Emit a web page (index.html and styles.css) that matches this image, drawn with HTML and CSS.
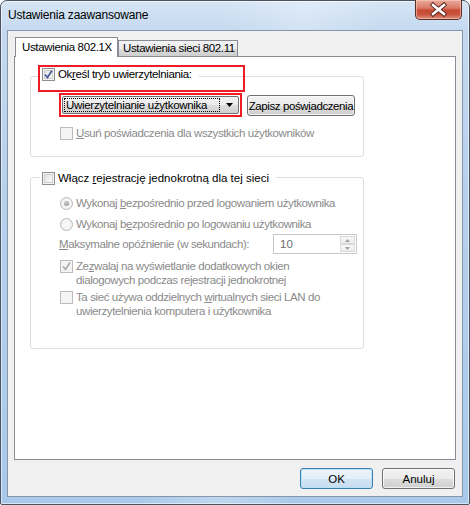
FILE: index.html
```html
<!DOCTYPE html>
<html lang="pl">
<head>
<meta charset="utf-8">
<title>Ustawienia zaawansowane</title>
<link rel="stylesheet" href="styles.css">
</head>
<body>
<div class="window">
  <div class="titlebar">
    <span class="title">Ustawienia zaawansowane</span>
    <div class="close">
      <svg width="45" height="18" viewBox="0 0 45 18">
        <path d="M17 5 L28 14 M28 5 L17 14" stroke="#5a2a22" stroke-width="4.5" stroke-linecap="square" fill="none"/>
        <path d="M17 5 L28 14 M28 5 L17 14" stroke="#ffffff" stroke-width="2.6" stroke-linecap="square" fill="none"/>
      </svg>
    </div>
  </div>
  <div class="client">
    <div class="tabs">
      <div class="tab active">Ustawienia 802.1X</div>
      <div class="tab">Ustawienia sieci 802.11</div>
    </div>
    <div class="panel">
      <div class="group g1">
        <div class="legend annotated tight">
          <span class="cb"><svg width="11" height="11" viewBox="0 0 11 11"><path d="M2 5.5 L4.5 8.5 L9 1.5" stroke="#4a5f98" stroke-width="1.8" fill="none"/></svg></span>
          <span>Ok<u>r</u>eśl tryb uwierzytelniania:</span>
        </div>
        <div class="combo-row">
          <div class="combo-mark">
            <div class="combo">
              <span class="focus">Uwierzytelnianie użytkownika</span>
              <svg class="arrow" width="7" height="4" viewBox="0 0 7 4"><path d="M0 0 H7 L3.5 4 Z" fill="#000"/></svg>
            </div>
          </div>
          <button class="btn save">Zapisz pośw<u>i</u>adczenia</button>
        </div>
        <div class="opt dim first-opt">
          <span class="cb off"></span>
          <span><u>U</u>suń poświadczenia dla wszystkich użytkowników</span>
        </div>
      </div>

      <div class="group g2">
        <div class="legend">
          <span class="cb"></span>
          <span>Włącz <u>r</u>ejestrację jednokrotną dla tej sieci</span>
        </div>
        <div class="opt dim radio1">
          <span class="rb on"></span>
          <span>Wykonaj <u>b</u>ezpośrednio przed logowaniem użytkownika</span>
        </div>
        <div class="opt dim radio2">
          <span class="rb"></span>
          <span>Wykonaj b<u>e</u>zpośrednio po logowaniu użytkownika</span>
        </div>
        <div class="delay-row dim">
          <span><u>M</u>aksymalne opóźnienie (w sekundach):</span>
          <div class="spin">
            <span class="spin-val">10</span>
            <div class="spin-btns">
              <span class="sb"><svg width="5" height="3" viewBox="0 0 5 3"><path d="M0 3 L2.5 0 L5 3 Z" fill="#a0a0a0"/></svg></span>
              <span class="sb"><svg width="5" height="3" viewBox="0 0 5 3"><path d="M0 0 L5 0 L2.5 3 Z" fill="#a0a0a0"/></svg></span>
            </div>
          </div>
        </div>
        <div class="opt dim multi opt3">
          <span class="cb off"><svg width="11" height="11" viewBox="0 0 11 11"><path d="M2 5.5 L4.5 8.5 L9 1.5" stroke="#a9a9a9" stroke-width="1.6" fill="none"/></svg></span>
          <span>Ze<u>z</u>walaj na wyświetlanie dodatkowych okien<br>dialogowych podczas rejestracji jednokrotnej</span>
        </div>
        <div class="opt dim multi opt4">
          <span class="cb off"></span>
          <span>Ta sieć używa oddzielnych <u>w</u>irtualnych sieci LAN do<br>uwierzytelnienia komputera i użytkownika</span>
        </div>
      </div>
    </div>
    <div class="footer">
      <button class="btn default">OK</button>
      <button class="btn">Anuluj</button>
    </div>
  </div>
</div>
</body>
</html>
```
FILE: styles.css
```css
* { box-sizing: border-box; }
html, body { margin: 0; padding: 0; }
body {
  width: 470px;
  height: 505px;
  overflow: hidden;
  font-family: "Liberation Sans", Arial, sans-serif;
  font-size: 11.5px;
  color: #000;
  background: #fff;
}
u { text-decoration: underline; text-underline-offset: 1px; }

.window {
  width: 470px;
  height: 505px;
  border: 1px solid #4b5460;
  border-radius: 7px 7px 2px 2px;
  padding: 0 6px 7px 6px;
  background:
    linear-gradient(100deg, rgba(255,255,255,0) 40%, rgba(255,255,255,0.25) 55%, rgba(255,255,255,0) 70%),
    linear-gradient(to bottom, #d6e5f5 0px, #c4d9f0 30px, #b6d0ec 200px, #a9c9ea 100%);
  box-shadow: inset 0 0 0 1px rgba(255,255,255,0.55);
}

.titlebar {
  height: 29px;
  display: flex;
  justify-content: space-between;
  align-items: flex-start;
}
.title {
  padding-left: 1px;
  margin-top: 7px;
  line-height: 15px;
  font-size: 12px;
  letter-spacing: -0.2px;
  color: #000;
}
.close {
  width: 47px;
  height: 20px;
  margin-top: -1px;
  margin-right: 1px;
  border: 1px solid #5c2e28;
  border-top: none;
  border-radius: 0 0 5px 5px;
  background: linear-gradient(to bottom, #e9a99a 0%, #dc7d6b 40%, #c84a33 55%, #c9523b 75%, #dd8f7a 100%);
  box-shadow: inset 0 0 0 1px rgba(255,210,200,0.55);
  display: flex;
}

.client {
  height: 467px;
  border: 1px solid #8597ab;
  background: #f0f0f0;
  padding: 6px 0 0 0;
}

.tabs {
  height: 19px;
  margin-left: 7px;
  display: flex;
  align-items: flex-end;
}
.tab {
  height: 16px;
  width: 120px;
  border: 1px solid #898c95;
  border-bottom: none;
  background: linear-gradient(to bottom, #f2f2f2 0%, #ebebeb 50%, #dddddd 51%, #cfcfcf 100%);
  line-height: 15px;
  padding-left: 4px;
  white-space: nowrap;
  letter-spacing: -0.35px;
}
.tab.active {
  height: 20px;
  width: 103px;
  margin-bottom: -1px;
  background: #fff;
  position: relative;
  z-index: 1;
  padding-left: 6px;
  line-height: 19px;
}

.panel {
  height: 404px;
  margin: 0 6px;
  border: 1px solid #898c95;
  background: #fff;
  padding-left: 15px;
  padding-top: 19px;
}

.group {
  width: 334px;
  border: 1px solid #d5dfe5;
  border-radius: 3px;
}
.g1 { padding-bottom: 15px; }
.g2 { margin-top: 20px; padding-bottom: 30px; }

.legend {
  display: flex;
  width: fit-content;
  align-items: center;
  gap: 3px;
  height: 15px;
  line-height: 15px;
  margin-left: 9px;
  padding: 0 7px 0 2px;
  background: #fff;
  position: relative;
  white-space: nowrap;
}
.legend.tight { letter-spacing: -0.35px; }
.g1 .legend { margin-top: -10px; }
.g2 .legend { margin-top: -7px; }
.annotated::after {
  content: "";
  position: absolute;
  left: -2px;
  top: -2px;
  width: 203px;
  height: 23px;
  border: 2px solid #ee1c25;
}

.cb {
  flex: none;
  width: 13px;
  height: 13px;
  border: 1px solid #8e8f8f;
  background: linear-gradient(135deg, #dcdcdc 0%, #f6f6f6 70%, #ffffff 100%);
  box-shadow: inset 0 0 0 1px #f4f4f4, inset 0 0 0 2px #d0d0d0;
  display: inline-flex;
  align-items: center;
  justify-content: center;
}
.cb svg { display: block; }
.cb.off {
  border-color: #bcbcbc;
  background: #f4f4f4;
  box-shadow: none;
}

.rb {
  flex: none;
  width: 13px;
  height: 13px;
  border: 1px solid #b7b7b7;
  border-radius: 50%;
  background: radial-gradient(circle at 50% 50%, #fafafa 0%, #eeeeee 100%);
  display: inline-flex;
  align-items: center;
  justify-content: center;
}
.rb.on::before {
  content: "";
  width: 5px;
  height: 5px;
  border-radius: 50%;
  background: radial-gradient(circle at 40% 35%, #d0d0d0, #8a8a8a);
}

.combo-row {
  display: flex;
  align-items: flex-start;
  margin-top: 11px;
  margin-left: 28px;
}
.combo-mark {
  width: 183px;
  height: 24px;
  border: 2px solid #ee1c25;
  padding: 1px;
}
.combo {
  height: 18px;
  border: 1px solid #707070;
  border-radius: 2px;
  background: linear-gradient(to bottom, #f2f2f2 0%, #ebebeb 50%, #dddddd 51%, #cfcfcf 100%);
  display: flex;
  align-items: center;
  padding: 0 5px 0 1px;
}
.focus {
  flex: 1;
  height: 14px;
  line-height: 12px;
  border: 1px dotted #000;
  padding-left: 1px;
  margin-right: 6px;
  white-space: nowrap;
  overflow: hidden;
  letter-spacing: -0.3px;
}
.arrow { flex: none; }

.btn {
  font-family: inherit;
  font-size: 11.5px;
  color: #000;
  height: 21px;
  padding: 0;
  border: 1px solid #707070;
  border-radius: 3px;
  background: linear-gradient(to bottom, #f2f2f2 0%, #ebebeb 50%, #dddddd 51%, #cfcfcf 100%);
  box-shadow: inset 0 0 0 1px rgba(255,255,255,0.7);
  line-height: 18px;
  white-space: nowrap;
}
.save {
  width: 108px;
  margin-left: 5px;
  margin-top: 2px;
  letter-spacing: -0.4px;
}

.opt {
  display: flex;
  align-items: center;
  gap: 3px;
  line-height: 15px;
  margin-left: 29px;
  white-space: nowrap;
}
.dim { color: #8a8a8a; letter-spacing: -0.4px; }
.first-opt { margin-top: 9px; }
.radio1 { margin-top: 10px; }
.radio2 { margin-top: 6px; }
.opt.multi { align-items: flex-start; line-height: 14px; }
.opt.multi .cb { margin-top: 1px; }
.opt3 { margin-top: 5px; }
.opt4 { margin-top: 3px; }

.delay-row {
  display: flex;
  align-items: center;
  justify-content: space-between;
  margin-top: 2px;
  margin-left: 28px;
  padding-right: 6px;
  height: 20px;
  white-space: nowrap;
}
.spin {
  width: 84px;
  height: 20px;
  border: 1px solid #c9c9c9;
  background: #fff;
  display: flex;
  align-items: center;
  justify-content: space-between;
  padding: 1px;
  letter-spacing: 0;
}
.spin-val { padding-left: 5px; color: #6d6d6d; }
.spin-btns {
  width: 15px;
  height: 16px;
  display: flex;
  flex-direction: column;
}
.sb {
  flex: 1;
  border: 1px solid #d9d9d9;
  background: linear-gradient(to bottom, #f8f8f8, #ececec);
  display: flex;
  align-items: center;
  justify-content: center;
}
.sb svg { display: block; }

.footer {
  display: flex;
  justify-content: flex-end;
  gap: 9px;
  margin-top: 8px;
  padding-right: 7px;
}
.footer .btn { width: 73px; }
.btn.default {
  border-color: #3c7fb1;
  background: linear-gradient(to bottom, #eef6fc 0%, #e3eef8 50%, #d2e5f4 51%, #c8ddef 100%);
  box-shadow: inset 0 0 0 1px rgba(180,225,250,0.9);
}
```
